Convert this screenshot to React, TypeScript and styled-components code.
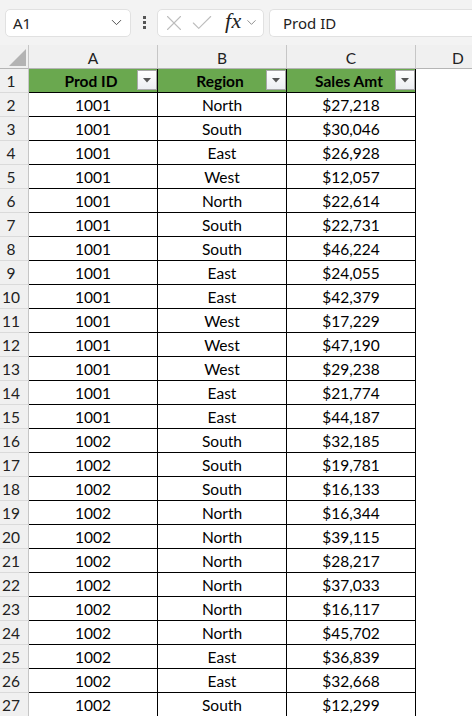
import React from "react";
import styled, { createGlobalStyle } from "styled-components";
import { ChevronDown, X, Check } from "lucide-react";

const rows: [string, string, string][] = [
  ["1001", "North", "$27,218"],
  ["1001", "South", "$30,046"],
  ["1001", "East", "$26,928"],
  ["1001", "West", "$12,057"],
  ["1001", "North", "$22,614"],
  ["1001", "South", "$22,731"],
  ["1001", "South", "$46,224"],
  ["1001", "East", "$24,055"],
  ["1001", "East", "$42,379"],
  ["1001", "West", "$17,229"],
  ["1001", "West", "$47,190"],
  ["1001", "West", "$29,238"],
  ["1001", "East", "$21,774"],
  ["1001", "East", "$44,187"],
  ["1002", "South", "$32,185"],
  ["1002", "South", "$19,781"],
  ["1002", "South", "$16,133"],
  ["1002", "North", "$16,344"],
  ["1002", "North", "$39,115"],
  ["1002", "North", "$28,217"],
  ["1002", "North", "$37,033"],
  ["1002", "North", "$16,117"],
  ["1002", "North", "$45,702"],
  ["1002", "East", "$36,839"],
  ["1002", "East", "$32,668"],
  ["1002", "South", "$12,299"],
];

const headers = ["Prod ID", "Region", "Sales Amt"];

const App: React.FC = () => {
  return (
    <Page>
      <GlobalStyle />
      <Toolbar>
        <NameBox>
          <span>A1</span>
          <ChevronDown size={17} strokeWidth={1.3} color="#444" />
        </NameBox>
        <Dots>
          <i />
          <i />
          <i />
        </Dots>
        <FormulaButtons>
          <X size={26} strokeWidth={1} color="#bdbdbd" />
          <Check size={26} strokeWidth={1} color="#bdbdbd" />
          <Fx>fx</Fx>
          <ChevronDown size={15} strokeWidth={1.3} color="#777" />
        </FormulaButtons>
        <FormulaBar>Prod ID</FormulaBar>
      </Toolbar>

      <Sheet>
        <Corner>
          <Triangle />
        </Corner>
        {["A", "B", "C", "D"].map((l) => (
          <ColHead key={l} $last={l === "D"}>
            {l}
          </ColHead>
        ))}

        <RowHead>1</RowHead>
        {headers.map((h) => (
          <HeaderCell key={h}>
            <span>{h}</span>
            <FilterButton>
              <svg width="8" height="5" viewBox="0 0 8 5">
                <path d="M0 0 H8 L4 4.5 Z" fill="#555" />
              </svg>
            </FilterButton>
          </HeaderCell>
        ))}
        <Blank />

        {rows.map((r, i) => (
          <React.Fragment key={i}>
            <RowHead>{i + 2}</RowHead>
            {r.map((v, j) => (
              <Cell key={j}>{v}</Cell>
            ))}
            <Blank />
          </React.Fragment>
        ))}
      </Sheet>
    </Page>
  );
};

const GlobalStyle = createGlobalStyle`
  html, body {
    margin: 0;
    padding: 0;
    background: #ffffff;
    overflow: hidden;
  }
`;

const Page = styled.div`
  width: 472px;
  height: 716px;
  overflow: hidden;
  font-family: "Noto Sans", "Liberation Sans", sans-serif;
  background: #fff;
`;

const Toolbar = styled.div`
  display: flex;
  align-items: center;
  height: 45px;
  padding: 0 0 0 5px;
  background: #f3f3f3;
  box-sizing: border-box;
`;

const Box = styled.div`
  height: 28px;
  box-sizing: border-box;
  background: #fff;
  border: 1px solid #e1e1e1;
  border-radius: 5px;
  display: flex;
  align-items: center;
`;

const NameBox = styled(Box)`
  width: 126px;
  padding: 0 5px 0 7px;
  justify-content: space-between;
  font-size: 15px;
  color: #222;
`;

const Dots = styled.div`
  width: 26px;
  display: flex;
  flex-direction: column;
  align-items: center;
  gap: 2px;

  i {
    width: 3px;
    height: 3px;
    background: #555;
  }
`;

const FormulaButtons = styled(Box)`
  width: 107px;
  padding: 0 4px 0 3px;
  gap: 2px;
`;

const Fx = styled.span`
  font-family: "Liberation Serif", serif;
  font-style: italic;
  font-size: 22px;
  color: #222;
  margin-left: 8px;
  margin-top: -4px;
  letter-spacing: 0.5px;
`;

const FormulaBar = styled(Box)`
  flex: 1;
  margin-left: 5px;
  padding-left: 13px;
  border-right: none;
  border-radius: 5px 0 0 5px;
  font-size: 15px;
  color: #222;
`;

const Sheet = styled.div`
  display: grid;
  grid-template-columns: 29px 129px 129px 129px 1fr;
  grid-auto-rows: 24px;
  font-family: Lato, "Open Sans", sans-serif;
  font-size: 15.5px;
  color: #000;
`;

const HeadBase = styled.div`
  background: #f0f0f0;
  box-sizing: border-box;
  display: flex;
  align-items: center;
  justify-content: center;
  font-size: 15.5px;
  color: #222;
`;

const Corner = styled(HeadBase)`
  border-right: 1px solid #c6c6c6;
  border-bottom: 1px solid #b5b5b5;
  align-items: flex-end;
  justify-content: flex-end;
  padding: 0 2px 2px 0;
`;

const Triangle = styled.div`
  width: 17px;
  height: 17px;
  background: #b3b3b3;
  clip-path: polygon(100% 0, 100% 100%, 0 100%);
`;

const ColHead = styled(HeadBase)<{ $last?: boolean }>`
  border-right: ${(p) => (p.$last ? "none" : "1px solid #c6c6c6")};
  border-bottom: 1px solid #b5b5b5;
  padding-top: 2px;
  ${(p) => p.$last && "justify-content: flex-start; padding-left: 36px;"}
`;

const RowHead = styled(HeadBase)`
  border-right: 1px solid #c6c6c6;
  border-bottom: 1px solid #dadada;
  padding-right: 6px;
`;

const HeaderCell = styled.div`
  position: relative;
  background: #6aa84f;
  box-sizing: border-box;
  border-right: 1px solid #000;
  border-bottom: 1px solid #000;
  display: flex;
  align-items: center;
  justify-content: center;
  font-weight: 700;
  padding-right: 4px;
`;

const FilterButton = styled.div`
  position: absolute;
  right: 0;
  top: 1px;
  width: 20px;
  height: 20px;
  box-sizing: border-box;
  border: 1px solid #a8a8a8;
  background: linear-gradient(#ffffff, #eceef2);
  display: flex;
  align-items: center;
  justify-content: center;
`;

const Cell = styled.div`
  box-sizing: border-box;
  border-right: 1px solid #000;
  border-bottom: 1px solid #000;
  display: flex;
  align-items: center;
  justify-content: center;
  padding-top: 1px;
`;

const Blank = styled.div`
  background: #fff;
`;

export default App;
